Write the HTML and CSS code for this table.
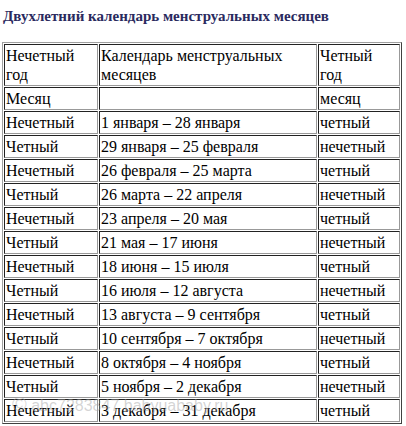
FILE: index.html
```html
<!DOCTYPE html>
<html lang="ru">
<head>
<meta charset="utf-8">
<title>Двухлетний календарь менструальных месяцев</title>
<link rel="stylesheet" href="styles.css">
</head>
<body>
<div class="page">
  <h1 class="title">Двухлетний календарь менструальных месяцев</h1>
  <table class="cal">
    <colgroup>
      <col class="c1"><col class="c2"><col class="c3">
    </colgroup>
    <tr class="head"><td>Нечетный<br>год</td><td>Календарь менструальных<br>месяцев</td><td>Четный<br>год</td></tr>
    <tr><td>Месяц</td><td></td><td>месяц</td></tr>
    <tr><td>Нечетный</td><td>1 января – 28 января</td><td>четный</td></tr>
    <tr><td>Четный</td><td>29 января – 25 февраля</td><td>нечетный</td></tr>
    <tr><td>Нечетный</td><td>26 февраля – 25 марта</td><td>четный</td></tr>
    <tr><td>Четный</td><td>26 марта – 22 апреля</td><td>нечетный</td></tr>
    <tr><td>Нечетный</td><td>23 апреля – 20 мая</td><td>четный</td></tr>
    <tr><td>Четный</td><td>21 мая – 17 июня</td><td>нечетный</td></tr>
    <tr><td>Нечетный</td><td>18 июня – 15 июля</td><td>четный</td></tr>
    <tr><td>Четный</td><td>16 июля – 12 августа</td><td>нечетный</td></tr>
    <tr><td>Нечетный</td><td>13 августа – 9 сентября</td><td>четный</td></tr>
    <tr><td>Четный</td><td>10 сентября – 7 октября</td><td>нечетный</td></tr>
    <tr><td>Нечетный</td><td>8 октября – 4 ноября</td><td>четный</td></tr>
    <tr><td>Четный</td><td>5 ноября – 2 декабря</td><td>нечетный</td></tr>
    <tr><td>Нечетный</td><td>3 декабря – 31 декабря</td><td>четный</td></tr>
  </table>
  <div class="watermark"><span class="wm-logo">©</span> abc7283847 babyuababy.ru</div>
</div>
</body>
</html>
```

FILE: styles.css
```css
html, body {
  margin: 0;
  padding: 0;
  background: #ffffff;
}

.page {
  position: relative;
  padding: 7px 0 0 2px;
  font-family: "Liberation Serif", "Times New Roman", serif;
  color: #000;
}

.title {
  margin: 0 0 17px 1px;
  font-size: 15px;
  font-weight: bold;
  line-height: 18px;
  color: #2a2a5e;
  white-space: nowrap;
}

.cal {
  width: 400px;
  border-collapse: separate;
  border-spacing: 1px;
  border-style: solid;
  border-width: 1px;
  border-color: #a0a0a0 #404040 #404040 #a0a0a0;
  table-layout: fixed;
  font-size: 16px;
  line-height: 19px;
}

.c1 { width: 94px; }
.c2 { width: 218px; }
.c3 { width: 82px; }

.cal td {
  border-style: solid;
  border-width: 1px;
  border-color: #222 #999 #999 #222;
  padding: 1px 0 1px 1px;
  height: 19px;
  vertical-align: middle;
  white-space: nowrap;
}

.watermark {
  position: absolute;
  left: 12px;
  top: 394px;
  font-family: "Liberation Sans", Arial, sans-serif;
  font-size: 16px;
  line-height: 20px;
  color: rgba(160, 160, 160, 0.45);
  white-space: nowrap;
}

.wm-logo {
  display: inline-block;
  font-size: 20px;
  color: rgba(170, 170, 170, 0.45);
}
```
